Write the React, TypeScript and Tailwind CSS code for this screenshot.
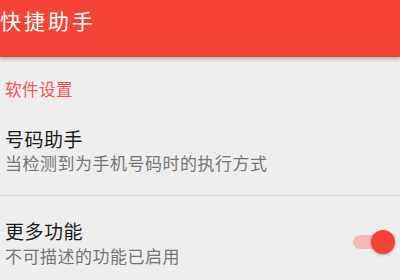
import React from "react";

const font = { fontFamily: '"Noto Sans CJK SC", "Noto Sans", sans-serif' };

export default function App() {
  return (
    <div
      className="w-[400px] h-[280px] bg-[#eeeeee] overflow-hidden flex flex-col"
      style={font}
    >
      <div className="relative z-10 h-[57px] shrink-0 bg-[#f44336] shadow-[0_2px_4px_rgba(0,0,0,0.28)] pt-[10px]">
        <div className="text-[21px] leading-none tracking-[3px] text-white">快捷助手</div>
      </div>

      <div className="mt-[24px] pl-[5px] text-[16.5px] leading-none tracking-[0.5px] text-[#f4554e]">
        软件设置
      </div>

      <div className="mt-[31px] pl-[5px] text-[19px] leading-none tracking-[0.5px] text-[#1a1a1a]">
        号码助手
      </div>
      <div className="mt-[6px] pl-[5px] text-[17px] leading-none tracking-[0.5px] text-[#757575]">
        当检测到为手机号码时的执行方式
      </div>

      <div className="mt-[24px] h-px bg-[#d4d4d4]" />

      <div className="mt-[25px] flex items-center justify-between pl-[5px] pr-[5px]">
        <div className="flex flex-col">
          <div className="text-[19px] leading-none tracking-[0.5px] text-[#1a1a1a]">更多功能</div>
          <div className="mt-[7px] text-[17px] leading-none tracking-[0.5px] text-[#757575]">
            不可描述的功能已启用
          </div>
        </div>
        <div className="relative w-[42px] h-[24px]">
          <div className="absolute left-0 top-[5px] w-[34px] h-[14px] rounded-full bg-[#f7b9b5]" />
          <div className="absolute right-0 top-0 w-[24px] h-[24px] rounded-full bg-[#f44336] shadow-[0_1px_3px_rgba(0,0,0,0.3)]" />
        </div>
      </div>
    </div>
  );
}
